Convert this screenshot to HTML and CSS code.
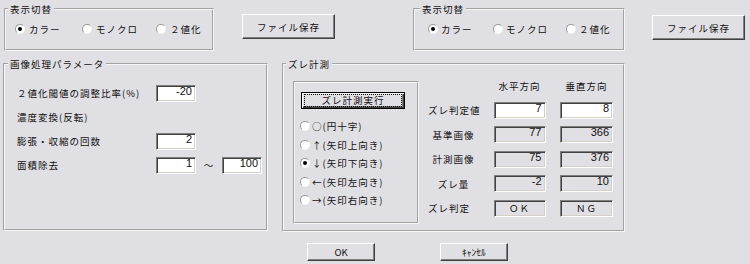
FILE: index.html
```html
<!DOCTYPE html>
<html>
<head>
    <meta charset="utf-8">
    <link rel="stylesheet" href="styles.css">
</head>

<body>
    <div class="dialog">
        <div class="top-row">
            <fieldset class="group view-group">
                <legend>表示切替</legend>
                <div class="radio-row">
                    <label class="radio-item"><span class="radio checked"></span>カラー</label>
                    <label class="radio-item"><span class="radio"></span>モノクロ</label>
                    <label class="radio-item"><span class="radio"></span>２値化</label>
                </div>
            </fieldset>
            <button class="btn save-btn">ファイル保存</button>

            <fieldset class="group view-group view-group-right">
                <legend>表示切替</legend>
                <div class="radio-row">
                    <label class="radio-item"><span class="radio checked"></span>カラー</label>
                    <label class="radio-item"><span class="radio"></span>モノクロ</label>
                    <label class="radio-item"><span class="radio"></span>２値化</label>
                </div>
            </fieldset>
            <button class="btn save-btn save-btn-right">ファイル保存</button>
        </div>

        <div class="mid-row">
            <fieldset class="group param-group">
                <legend>画像処理パラメータ</legend>
                <div class="param-grid">
                    <span class="param-label">２値化閾値の調整比率(%)</span>
                    <span class="field">-20</span>
                    <span class="param-label">濃度変換(反転)</span>
                    <span class="param-label">膨張・収縮の回数</span>
                    <span class="field">2</span>
                    <span class="param-label">面積除去</span>
                    <span class="field">1</span>
                    <span class="tilde">～</span>
                    <span class="field">100</span>
                </div>
            </fieldset>

            <fieldset class="group measure-group">
                <legend>ズレ計測</legend>
                <div class="measure-body">
                    <div class="mark-frame">
                        <button class="btn default-btn"><span class="focus">ズレ計測実行</span></button>
                        <div class="mark-list">
                            <label class="radio-item"><span class="radio"></span>○(円十字)</label>
                            <label class="radio-item"><span class="radio"></span>↑(矢印上向き)</label>
                            <label class="radio-item"><span class="radio checked"></span>↓(矢印下向き)</label>
                            <label class="radio-item"><span class="radio"></span>←(矢印左向き)</label>
                            <label class="radio-item"><span class="radio"></span>→(矢印右向き)</label>
                        </div>
                    </div>

                    <div class="result-grid">
                        <span></span>
                        <span class="col-head">水平方向</span>
                        <span class="col-head">垂直方向</span>

                        <span class="row-label">ズレ判定値</span>
                        <span class="field">7</span>
                        <span class="field">8</span>

                        <span class="row-label">基準画像</span>
                        <span class="field readonly">77</span>
                        <span class="field readonly">366</span>

                        <span class="row-label">計測画像</span>
                        <span class="field readonly">75</span>
                        <span class="field readonly">376</span>

                        <span class="row-label">ズレ量</span>
                        <span class="field readonly">-2</span>
                        <span class="field readonly">10</span>

                        <span class="row-label row-label-left">ズレ判定</span>
                        <span class="field readonly verdict">ＯＫ</span>
                        <span class="field readonly verdict">ＮＧ</span>
                    </div>
                </div>
            </fieldset>
        </div>

        <div class="bottom-row">
            <button class="btn dialog-btn ok-btn">OK</button>
            <button class="btn dialog-btn">ｷｬﾝｾﾙ</button>
        </div>
    </div>
</body>
</html>
```

FILE: styles.css
```css
* {
    margin: 0;
    padding: 0;
    box-sizing: border-box;
}

:root {
    --face: #e0dfe3;
    --shadow: #808080;
    --dark: #404040;
    --light: #fff;
}

body {
    background: var(--face);
    color: #111;
    font-family: "Noto Sans CJK JP", sans-serif;
    font-size: 9.5px;
    letter-spacing: 1px;
    line-height: 14px;
}

.dialog {
    width: 750px;
    height: 264px;
    padding-top: 2px;
}

/* group boxes */
.group {
    border: 2px groove #f6f6f6;
    min-width: 0;
}

.group legend {
    padding: 0 2px;
    line-height: 14px;
}

.top-row {
    display: flex;
    align-items: flex-start;
}

.view-group {
    width: 210px;
    height: 49px;
    margin-left: 4px;
}

.view-group legend { margin-left: 2px; }

.radio-row {
    display: grid;
    grid-template-columns: 67px 74px auto;
    padding: 6px 0 0 9px;
}

.view-group-right {
    width: 212px;
    margin-left: 78px;
}

.view-group-right legend { margin-left: 5px; }

.view-group-right .radio-row {
    grid-template-columns: 65px 73px auto;
    padding-left: 13px;
}

.view-group-right .radio-item { gap: 3px; }

/* radio buttons */
.radio-item {
    display: flex;
    align-items: center;
    gap: 4px;
    white-space: nowrap;
}

.radio {
    flex: none;
    width: 10px;
    height: 10px;
    border-radius: 50%;
    background: #fff;
    border: 1px solid;
    border-color: #9a9a9a #f4f4f4 #f4f4f4 #9a9a9a;
    display: grid;
    place-items: center;
}

.radio.checked::after {
    content: "";
    width: 4px;
    height: 4px;
    border-radius: 50%;
    background: #000;
}

/* buttons */
.btn {
    font: inherit;
    color: #111;
    background: var(--face);
    border: 1px solid;
    border-color: var(--light) var(--dark) var(--dark) var(--light);
    box-shadow: inset -1px -1px 0 var(--shadow);
    letter-spacing: 1px;
}

.save-btn {
    width: 93px;
    height: 25px;
    margin: 12px 0 0 28px;
}

.save-btn-right {
    margin: 13px 0 0 27px;
}

.default-btn {
    width: 104px;
    height: 17px;
    margin-left: 1px;
    padding: 1px 2px;
    display: flex;
    border-color: #000;
    box-shadow: inset 1px 1px 0 var(--light), inset -1px -1px 0 var(--dark), inset -2px -2px 0 var(--shadow);
}

.default-btn .focus {
    flex: 1;
    display: flex;
    align-items: center;
    justify-content: center;
    border: 1px dotted #000;
    line-height: 11px;
}

/* parameter group */
.mid-row {
    display: flex;
    align-items: flex-start;
    margin-top: 6px;
}

.param-group {
    width: 265px;
    height: 174px;
    margin-left: 3px;
}

.param-group legend { margin-left: 3px; }

.param-grid {
    display: grid;
    grid-template-columns: 139px 40px 26px 40px;
    grid-auto-rows: 24px;
    align-items: center;
    padding: 10px 0 0 12px;
}

.param-label { grid-column: 1; }

.tilde { text-align: center; }

/* text fields */
.field {
    height: 17px;
    background: #fff;
    border: 1px solid;
    border-color: var(--shadow) var(--light) var(--light) var(--shadow);
    box-shadow: inset 1px 1px 0 var(--dark), inset -1px -1px 0 #d4d0c8;
    font-family: "Liberation Sans", sans-serif;
    font-size: 11px;
    letter-spacing: 0;
    line-height: 11px;
    padding-right: 3px;
    text-align: right;
}

.field.readonly { background: var(--face); }

.field.verdict {
    font-family: "Noto Sans CJK JP", sans-serif;
    font-size: 9.5px;
    letter-spacing: 1px;
    line-height: 15px;
    text-align: center;
    padding: 0;
}

/* measurement group */
.measure-group {
    width: 343px;
    height: 175px;
    margin-left: 14px;
}

.measure-group legend { margin-left: 2px; }

.measure-body {
    display: flex;
    align-items: flex-start;
    padding-left: 9px;
}

.mark-frame {
    width: 126px;
    height: 143px;
    margin-top: 10px;
    padding: 9px 0 0 5px;
    border: 2px groove #f6f6f6;
}

.mark-list {
    margin-top: 7.75px;
}

.mark-list .radio-item {
    height: 18.5px;
    gap: 2px;
}

.result-grid {
    display: grid;
    grid-template-columns: 51px 52px 53px;
    grid-template-rows: 15.5px repeat(5, 17px);
    column-gap: 14.5px;
    row-gap: 7.5px;
    align-items: center;
    margin: 7.5px 0 0 9px;
}

.col-head,
.row-label {
    text-align: center;
    white-space: nowrap;
}

.row-label-left { text-align: left; }

/* dialog buttons */
.bottom-row {
    display: flex;
    margin-top: 11px;
}

.dialog-btn {
    width: 68px;
    height: 18px;
    margin-left: 65px;
    line-height: 14px;
    letter-spacing: 0;
}

.ok-btn { margin-left: 307px; }
```
